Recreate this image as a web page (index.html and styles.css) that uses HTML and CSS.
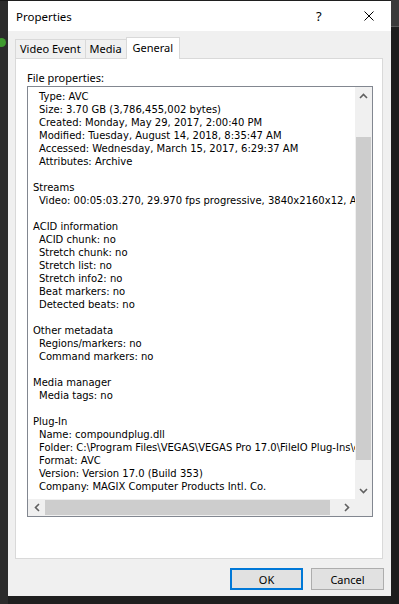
FILE: index.html
```html
<!DOCTYPE html>
<html lang="en">
<head>
  <meta charset="UTF-8" />
  <title>Properties</title>
  <link rel="stylesheet" href="styles.css">
</head>
<body>
<div class="screen">
  <div class="side-left"><span class="play-dot"></span></div>

  <div class="dialog">
    <div class="titlebar">
      <span class="title">Properties</span>
      <span class="tb-help">?</span>
      <span class="tb-close">
        <svg width="10" height="10" viewBox="0 0 10 10"><path d="M0.5 0.5 L9.5 9.5 M9.5 0.5 L0.5 9.5" stroke="#000" stroke-width="1" fill="none"/></svg>
      </span>
    </div>

    <div class="body">
      <div class="tabs">
        <div class="tab">Video Event</div>
        <div class="tab">Media</div>
        <div class="tab active">General</div>
      </div>

      <div class="panel">
        <div class="label">File properties:</div>
        <div class="listbox">
          <div class="content">
            <div class="ln sub">Type: AVC</div>
            <div class="ln sub">Size: 3.70 GB (3,786,455,002 bytes)</div>
            <div class="ln sub">Created: Monday, May 29, 2017, 2:00:40 PM</div>
            <div class="ln sub">Modified: Tuesday, August 14, 2018, 8:35:47 AM</div>
            <div class="ln sub">Accessed: Wednesday, March 15, 2017, 6:29:37 AM</div>
            <div class="ln sub">Attributes: Archive</div>
            <div class="ln"></div>
            <div class="ln">Streams</div>
            <div class="ln sub">Video: 00:05:03.270, 29.970 fps progressive, 3840x2160x12, AVC</div>
            <div class="ln"></div>
            <div class="ln">ACID information</div>
            <div class="ln sub">ACID chunk: no</div>
            <div class="ln sub">Stretch chunk: no</div>
            <div class="ln sub">Stretch list: no</div>
            <div class="ln sub">Stretch info2: no</div>
            <div class="ln sub">Beat markers: no</div>
            <div class="ln sub">Detected beats: no</div>
            <div class="ln"></div>
            <div class="ln">Other metadata</div>
            <div class="ln sub">Regions/markers: no</div>
            <div class="ln sub">Command markers: no</div>
            <div class="ln"></div>
            <div class="ln">Media manager</div>
            <div class="ln sub">Media tags: no</div>
            <div class="ln"></div>
            <div class="ln">Plug-In</div>
            <div class="ln sub">Name: compoundplug.dll</div>
            <div class="ln sub">Folder: C:\Program Files\VEGAS\VEGAS Pro 17.0\FileIO Plug-Ins\compoundplug</div>
            <div class="ln sub">Format: AVC</div>
            <div class="ln sub">Version: Version 17.0 (Build 353)</div>
            <div class="ln sub">Company: MAGIX Computer Products Intl. Co.</div>
          </div>

          <div class="vscroll">
            <div class="arrow">
              <svg width="9" height="6" viewBox="0 0 9 6"><path d="M1 5 L4.5 1.5 L8 5" stroke="#606060" stroke-width="1.6" fill="none"/></svg>
            </div>
            <div class="vtrack"><div class="vthumb"></div></div>
            <div class="arrow">
              <svg width="9" height="6" viewBox="0 0 9 6"><path d="M1 1 L4.5 4.5 L8 1" stroke="#606060" stroke-width="1.6" fill="none"/></svg>
            </div>
          </div>

          <div class="hscroll">
            <div class="arrow">
              <svg width="6" height="9" viewBox="0 0 6 9"><path d="M5 1 L1.5 4.5 L5 8" stroke="#606060" stroke-width="1.6" fill="none"/></svg>
            </div>
            <div class="htrack"><div class="hthumb"></div></div>
            <div class="arrow">
              <svg width="6" height="9" viewBox="0 0 6 9"><path d="M1 1 L4.5 4.5 L1 8" stroke="#606060" stroke-width="1.6" fill="none"/></svg>
            </div>
          </div>

          <div class="corner"></div>
        </div>
      </div>

      <div class="footer">
        <button class="btn default">OK</button>
        <button class="btn">Cancel</button>
      </div>
    </div>
  </div>

  <div class="side-right"></div>
</div>
</body>
</html>
```
FILE: styles.css
```css
body {
  margin: 0;
  background-color: #1f1f1f;
  font-family: "Noto Sans", "Open Sans", sans-serif;
  color: #000;
}
.screen {
  display: flex;
  height: 604px;
  overflow: hidden;
}
.side-left {
  width: 8px;
  background-color: #2b2b2b;
  border-top: 1px solid #161616;
  position: relative;
}
.play-dot {
  position: absolute;
  left: -3px;
  top: 37px;
  width: 9px;
  height: 9px;
  border-radius: 50%;
  background-color: #3f9a2f;
}
.side-right {
  width: 8px;
  background: linear-gradient(#3a3a3a 0, #3a3a3a 26px, #5a5a5a 26px, #5a5a5a 27px, #1d1d1d 27px);
}
.dialog {
  width: 383px;
  height: 595px;
  margin-top: 1px;
  background-color: #f0f0f0;
  display: flex;
  flex-direction: column;
}
.titlebar {
  height: 30px;
  background-color: #fff;
  display: flex;
  align-items: center;
  font-size: 11.5px;
}
.title {
  margin-left: 8px;
  flex: 1;
}
.tb-help {
  font-size: 13px;
  width: 20px;
  margin-right: 28px;
}
.tb-close {
  width: 10px;
  margin-right: 17px;
  display: flex;
}
.body {
  flex: 1;
  padding: 6px 7px 0 7px;
  display: flex;
  flex-direction: column;
}
.tabs {
  display: flex;
  align-items: flex-end;
  height: 22px;
  margin-bottom: -1px;
  position: relative;
  z-index: 1;
}
.tab {
  height: 18px;
  padding: 0 4px;
  border: 1px solid #d9d9d9;
  border-bottom: none;
  border-right: none;
  background-color: #f0f0f0;
  font-size: 11px;
  line-height: 18px;
  margin-bottom: 1px;
}
.tab.active {
  height: 21px;
  background-color: #fff;
  border-right: 1px solid #d9d9d9;
  padding: 0 6px;
  line-height: 19px;
  margin-bottom: 0;
}
.panel {
  background-color: #fff;
  border: 1px solid #d9d9d9;
  width: 368px;
  padding: 11px 0 0 11px;
  box-sizing: border-box;
  height: 501px;
}
.label {
  font-size: 11px;
  height: 16px;
  line-height: 16px;
}
.listbox {
  width: 346px;
  height: 431px;
  box-sizing: border-box;
  border: 1px solid #828790;
  display: grid;
  grid-template-columns: 327px 17px;
  grid-template-rows: 412px 17px;
  font-family: "DejaVu Sans", sans-serif;
  font-size: 10px;
}
.content {
  overflow: hidden;
  padding: 3px 0 0 5px;
}
.ln {
  height: 13px;
  line-height: 13px;
  white-space: nowrap;
}
.ln.sub {
  padding-left: 6px;
}
.vscroll {
  background-color: #f0f0f0;
  display: flex;
  flex-direction: column;
}
.vscroll .arrow {
  height: 17px;
  display: flex;
  align-items: center;
  justify-content: center;
}
.vtrack {
  flex: 1;
  padding-top: 33px;
  padding-bottom: 22px;
  display: flex;
}
.vthumb {
  flex: 1;
  margin: 0 1px;
  background-color: #cdcdcd;
}
.hscroll {
  background-color: #f0f0f0;
  display: flex;
}
.hscroll .arrow {
  width: 17px;
  display: flex;
  align-items: center;
  justify-content: center;
}
.htrack {
  flex: 1;
  padding-right: 8px;
  display: flex;
}
.hthumb {
  flex: 1;
  margin: 1px 0;
  background-color: #cdcdcd;
}
.corner {
  background-color: #f0f0f0;
}
.footer {
  display: flex;
  justify-content: flex-end;
  gap: 8px;
  padding: 9px 0 0 0;
}
.btn {
  width: 73px;
  height: 22px;
  border: 1px solid #adadad;
  background-color: #e1e1e1;
  font-family: "Noto Sans", "Open Sans", sans-serif;
  font-size: 11px;
  padding: 0;
}
.btn.default {
  border: 2px solid #0078d7;
}
```
